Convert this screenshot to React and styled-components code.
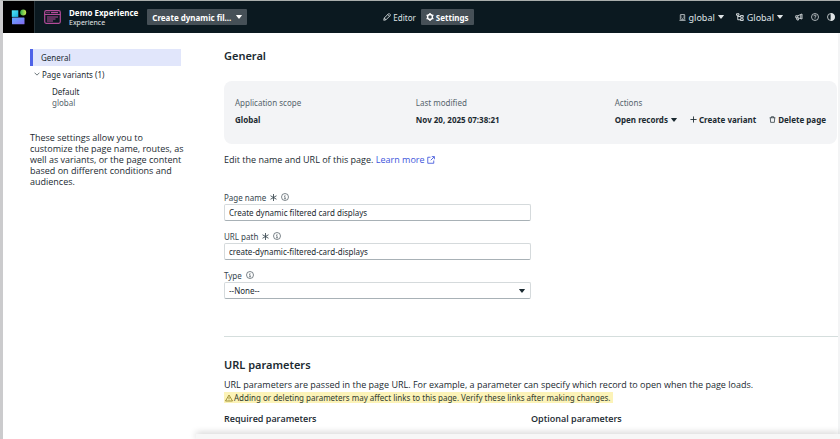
import React, { useId } from 'react';
import styled, { createGlobalStyle, css } from 'styled-components';

const GlobalStyle = createGlobalStyle`
  * { box-sizing: border-box; }
  body { margin: 0; background: #fff; }
  body, button, input, select { font-family: "Noto Sans", "Open Sans", sans-serif; font-size: 8px; color: #1b2a31; }
  h1, h2, h3, p, dl, dd, ul { margin: 0; padding: 0; }
`;

const proseFont = '"Open Sans", "Noto Sans", sans-serif';

const Shell = styled.div`
  height: 100vh;
  overflow: hidden;
  display: flex;
  flex-direction: column;
  border-top: 1px solid #a9aeac;
  border-left: 3px solid #cbcbcd;
`;

const Header = styled.header`
  flex: none;
  display: grid;
  grid-template-columns: 1fr auto 1fr;
  align-items: center;
  height: 32px;
  background: #0b1920;
  color: #e4e8ea;
`;

const HeaderGroup = styled.div`
  display: flex;
  align-items: center;
  align-self: stretch;
  gap: ${({ $gap }) => $gap}px;
  justify-content: ${({ $end }) => ($end ? 'flex-end' : 'flex-start')};
  padding-right: ${({ $end }) => ($end ? 5 : 0)}px;
`;

const ModeSwitch = styled(HeaderGroup)`
  padding-left: 14px;
`;

const LogoBox = styled.a`
  align-self: stretch;
  width: 32px;
  margin-right: 1px;
  display: grid;
  place-items: center;
  background: #000;
  border-right: 1px solid #27343a;
`;

const AppInfo = styled.div`
  margin-right: 1px;
  font-size: 7px;
  line-height: 10px;
  white-space: nowrap;
`;

const AppName = styled.h1`
  font-size: 8px;
  line-height: 11px;
  font-weight: 700;
  color: #fff;
`;

const BarButton = styled.button`
  display: flex;
  align-items: center;
  gap: ${({ $gap }) => $gap || 2}px;
  height: 16px;
  padding: 0 ${({ $filled }) => ($filled ? 5 : 0)}px;
  border: 0;
  border-radius: 1px;
  background: ${({ $filled }) => ($filled ? '#465057' : 'transparent')};
  color: ${({ $filled }) => ($filled ? '#fff' : '#dfe4e6')};
  font-weight: ${({ $filled }) => ($filled ? 700 : 400)};
  white-space: nowrap;
`;

const ScopeButton = styled(BarButton)`
  gap: 3px;
  font-size: 9px;
`;

const Body = styled.div`
  flex: 1;
  min-height: 0;
  display: grid;
  grid-template-columns: 151px minmax(0, 1fr);
  column-gap: 43px;
  padding-left: 27px;
  border-right: 2px solid #f3f4f5;
`;

const Sidebar = styled.aside`
  padding-top: 16px;
`;

const NavItem = styled.a`
  display: flex;
  align-items: center;
  height: 17px;
  padding-left: 8px;
  border-left: 3px solid #4f63e8;
  background: #e1e6fb;
  color: inherit;
  text-decoration: none;
`;

const TreeToggle = styled.button`
  display: flex;
  align-items: center;
  gap: 2px;
  height: 16px;
  padding: 0 0 0 4px;
  border: 0;
  background: none;
`;

const Variant = styled.a`
  display: block;
  margin: 4px 0 0 22px;
  line-height: 11px;
  color: inherit;
  text-decoration: none;
`;

const Muted = styled.div`
  color: #56656d;
`;

const Note = styled.p`
  margin: 24px -5px 0 0;
  font-family: ${proseFont};
  font-size: 9px;
  line-height: 11px;
`;

const Main = styled.main`
  padding-top: 13px;
`;

const Heading = styled.h2`
  font-size: 11px;
  line-height: 20px;
  font-weight: 600;
`;

const SummaryCard = styled.dl`
  display: grid;
  grid-template-columns: 180fr 198fr auto;
  margin: 15px 1px 0 0;
  padding: 14px 11px 16px;
  border-radius: 8px;
  background: #f3f4f6;
`;

const Term = styled.dt`
  line-height: 16px;
  color: #56656d;
`;

const Value = styled.dd`
  display: flex;
  align-items: center;
  gap: 13px;
  height: 17px;
  font-weight: 700;
`;

const Action = styled.button`
  display: flex;
  align-items: center;
  gap: ${({ $gap }) => $gap || 2}px;
  padding: 0;
  border: 0;
  background: none;
  font-weight: 700;
  white-space: nowrap;
`;

const Paragraph = styled.p`
  margin-top: ${({ $top }) => $top || 0}px;
  font-family: ${proseFont};
  font-size: 9px;
  line-height: ${({ $line }) => $line || 12}px;
`;

const Link = styled.a`
  color: #4055dc;
  text-decoration: none;
  svg { vertical-align: -1px; margin-left: 2px; }
`;

const Form = styled.form`
  width: 50%;
  margin-top: 22px;
  display: grid;
  gap: 8px;
`;

const FieldLabel = styled.label`
  display: flex;
  align-items: center;
  gap: 4px;
  height: 14px;
  color: #37464e;
`;

const control = css`
  display: block;
  width: 100%;
  height: 17px;
  padding: 0 4px;
  border: 1px solid #d5dadc;
  border-bottom-color: #a8b1b6;
  border-radius: 2px;
  background: #fff;
  outline: 0;
`;

const TextInput = styled.input`${control}`;

const Select = styled.select`
  ${control}
  appearance: none;
`;

const SelectBox = styled.div`
  display: grid;
  align-items: center;
  > * { grid-area: 1 / 1; }
  > svg { justify-self: end; margin-right: 6px; pointer-events: none; }
`;

const Divider = styled.hr`
  width: 100%;
  height: 1px;
  margin: 37px 0 18px;
  border: 0;
  background: #d5dedd;
`;

const Warning = styled.mark`
  display: flex;
  width: fit-content;
  align-items: center;
  gap: 1px;
  height: 11px;
  margin-top: 1px;
  padding: 0 3px 0 1px;
  background: #fcf3b8;
  color: #303b2f;
  white-space: nowrap;
`;

const ParamColumns = styled.div`
  display: grid;
  grid-template-columns: 1fr 1fr;
  margin-top: 8px;
`;

const ParamTitle = styled.h3`
  font-family: ${proseFont};
  font-size: 9px;
  line-height: 16px;
  font-weight: 600;
`;

const BottomPanel = styled.div`
  position: fixed;
  left: 196px;
  right: 0;
  bottom: 0;
  height: 5px;
  background: #f7f7f7;
  box-shadow: 0 -1px 7px rgba(0, 0, 0, 0.22);
`;

const Glyph = ({ size = 9, width = 1.4, box = 16, children }) => (
  <svg width={size} height={size} viewBox={`0 0 ${box} ${box}`} fill="none" stroke="currentColor" strokeWidth={width} aria-hidden="true">
    {children}
  </svg>
);

const Caret = () => (
  <svg width="6" height="4" viewBox="0 0 6 4" fill="currentColor" aria-hidden="true">
    <path d="M.4 0h5.2q.5 0 .2.5L3.4 3.6q-.4.5-.8 0L.2.5Q-.1 0 .4 0z" />
  </svg>
);

const Logo = () => (
  <svg width="16" height="16" viewBox="0 0 16 16" aria-hidden="true">
    <defs>
      <linearGradient id="teal" x1="0" y1="0" x2="1" y2="1"><stop stopColor="#55e8f5" /><stop offset="1" stopColor="#18aee0" /></linearGradient>
      <linearGradient id="violet" x1="0" y1="0" x2="1" y2="1"><stop stopColor="#62a9ff" /><stop offset="1" stopColor="#8467ee" /></linearGradient>
      <linearGradient id="lime"><stop stopColor="#2fae50" /><stop offset="1" stopColor="#c9e84e" /></linearGradient>
    </defs>
    <rect x=".8" y="1.300" width="6.500" height="6.600" fill="url(#teal)" />
    <rect x="1" y="8.600" width="12.500" height="6.700" rx=".5" fill="url(#violet)" />
    <circle cx="12.200" cy="3.500" r="3" fill="url(#lime)" />
  </svg>
);

const PageIcon = () => (
  <svg width="17" height="14" viewBox="0 0 17 14" fill="none" stroke="#b34b99" strokeWidth="1.200" aria-hidden="true">
    <rect x=".7" y=".7" width="15.600" height="12.600" rx="1.500" />
    <path d="M.6 4.500h15.800M3 7h11M3 9h8.500M3 11h6M2.500 2.600h1M4.500 2.600h1M7 2.600h7" />
  </svg>
);

const InfoIcon = () => (
  <Glyph size={8} width={1.3}><circle cx="8" cy="8" r="7" /><path d="M8 7v4.500M8 4.200v1.600M6.500 7H8M6.300 11.500h3.400" /></Glyph>
);

const RequiredIcon = () => (
  <Glyph size={7} width={1.700} box={14}><path d="M7 0v14M1 3.5l12 7M13 3.5l-12 7" /></Glyph>
);

const PencilIcon = () => (
  <Glyph size={8} width={1.7}><path d="M1.5 14.5l1-4.5L11 1.5q1-1 2 0l1.500 1.500q1 1 0 2L6 13.500zM9.500 3l3.500 3.500M2.500 10L6 13.500" /></Glyph>
);

const GearIcon = () => (
  <Glyph size={8} width={2.8}><circle cx="8" cy="8" r="4.900" /><path d="M8 0v3M8 13v3M1.100 4l2.600 1.500M12.300 10.500l2.600 1.500M1.100 12l2.600-1.500M12.300 5.500L14.900 4" /></Glyph>
);

const BuildingIcon = () => (
  <Glyph size={7} width={1.7}><path d="M3 13V2q0-1 1-1h8q1 0 1 1v11M1 14.500h14M5.500 4.500h1.500M9 4.500h1.500M5.500 7.500h1.500M9 7.500h1.500M6.500 14v-3h3v3" /></Glyph>
);

const TreeIcon = () => (
  <Glyph size={8} width={1.8}><path d="M1 1.500h5v3H1zM9 5h5.500v3.500H9zM9 11.500h5.500V15H9zM3.500 4.500v9H9M3.500 7H9" /></Glyph>
);

const MegaphoneIcon = () => (
  <Glyph size={8} width={1.700}><path d="M1.500 5.500h4L14 2v10L5.500 9.500h-4zM5.500 5.500v4M3 9.500l1 4.500h3l-1-4.500M11.500 3.500v7" /></Glyph>
);

const HelpIcon = () => (
  <Glyph size={8} width={1.500}><circle cx="8" cy="8" r="7" /><path d="M5.800 6.500q0-2.500 2.200-2.500t2.200 2Q10.200 7.500 8 8.300v1.200M8 10.800v1.500" /></Glyph>
);

const ContrastIcon = () => (
  <Glyph size={8} width={1.600}><circle cx="8" cy="8" r="7" /><path d="M8 1a7 7 0 0 1 0 14z" fill="currentColor" /></Glyph>
);

const ExternalIcon = () => (
  <Glyph size={8} width={1.700}><path d="M7 2.500H1.500v12h12V9M9.500 1.200h5.300v5.300M14.500 1.500L7.500 8.500" /></Glyph>
);

const ChevronIcon = () => (
  <Glyph size={6} width={1.700}><path d="M1.500 4.500L8 11l6.500-6.500" /></Glyph>
);

const PlusIcon = () => (
  <Glyph size={7} width={2}><path d="M8 1v14M1 8h14" /></Glyph>
);

const TrashIcon = () => (
  <Glyph size={7} width={1.600}><path d="M1.500 4h13M5.500 4V1.500h5V4M3 4l.7 10.500h8.600L13 4" /></Glyph>
);

const WarningIcon = () => (
  <Glyph size={8} width={1.600}><path d="M8 2L15 14H1zM8 6v4M8 11.200v1.500" stroke="#8b7b18" /></Glyph>
);

function Field({ label, required, value, options }) {
  const id = useId();
  return (
    <div>
      <FieldLabel htmlFor={id}>
        {label}
        {required && <RequiredIcon />}
        <InfoIcon />
      </FieldLabel>
      {options ? (
        <SelectBox>
          <Select id={id}>{options.map((o) => <option key={o}>{o}</option>)}</Select>
          <Caret />
        </SelectBox>
      ) : (
        <TextInput id={id} type="text" defaultValue={value} required={required} />
      )}
    </div>
  );
}

export default function App() {
  return (
    <>
      <GlobalStyle />
      <Shell>
        <Header>
          <HeaderGroup $gap={8}>
            <LogoBox href="#home" aria-label="Home"><Logo /></LogoBox>
            <PageIcon />
            <AppInfo>
              <AppName>Demo Experience</AppName>
              Experience
            </AppInfo>
            <BarButton $filled $gap={5}>Create dynamic fil... <Caret /></BarButton>
          </HeaderGroup>
          <ModeSwitch $gap={5}>
            <BarButton><PencilIcon />Editor</BarButton>
            <BarButton $filled><GearIcon />Settings</BarButton>
          </ModeSwitch>
          <HeaderGroup $gap={12} $end>
            <ScopeButton><BuildingIcon />global <Caret /></ScopeButton>
            <ScopeButton><TreeIcon />Global <Caret /></ScopeButton>
            <HeaderGroup $gap={8}>
              <BarButton aria-label="Announcements"><MegaphoneIcon /></BarButton>
              <BarButton aria-label="Help"><HelpIcon /></BarButton>
              <BarButton aria-label="Contrast"><ContrastIcon /></BarButton>
            </HeaderGroup>
          </HeaderGroup>
        </Header>
        <Body>
          <Sidebar>
            <nav>
              <NavItem href="#general">General</NavItem>
              <TreeToggle aria-expanded="true"><ChevronIcon />Page variants (1)</TreeToggle>
              <Variant href="#default">Default<Muted>global</Muted></Variant>
            </nav>
            <Note>
              These settings allow you to customize the page name, routes, as well as variants, or the
              page content based on different conditions and audiences.
            </Note>
          </Sidebar>
          <Main>
            <Heading>General</Heading>
            <SummaryCard>
              <div>
                <Term>Application scope</Term>
                <Value>Global</Value>
              </div>
              <div>
                <Term>Last modified</Term>
                <Value>Nov 20, 2025 07:38:21</Value>
              </div>
              <div>
                <Term>Actions</Term>
                <Value>
                  <Action $gap={3}>Open records <Caret /></Action>
                  <Action><PlusIcon />Create variant</Action>
                  <Action><TrashIcon />Delete page</Action>
                </Value>
              </div>
            </SummaryCard>
            <Paragraph $top={8} $line={16}>
              Edit the name and URL of this page. <Link href="#learn">Learn more<ExternalIcon /></Link>
            </Paragraph>
            <Form>
              <Field label="Page name" required value="Create dynamic filtered card displays" />
              <Field label="URL path" required value="create-dynamic-filtered-card-displays" />
              <Field label="Type" options={['--None--']} />
            </Form>
            <Divider />
            <Heading>URL parameters</Heading>
            <Paragraph $top={4}>
              URL parameters are passed in the page URL. For example, a parameter can specify which record to open when the page loads.
            </Paragraph>
            <Warning><WarningIcon />Adding or deleting parameters may affect links to this page. Verify these links after making changes.</Warning>
            <ParamColumns>
              <ParamTitle>Required parameters</ParamTitle>
              <ParamTitle>Optional parameters</ParamTitle>
            </ParamColumns>
          </Main>
        </Body>
        <BottomPanel />
      </Shell>
    </>
  );
}
